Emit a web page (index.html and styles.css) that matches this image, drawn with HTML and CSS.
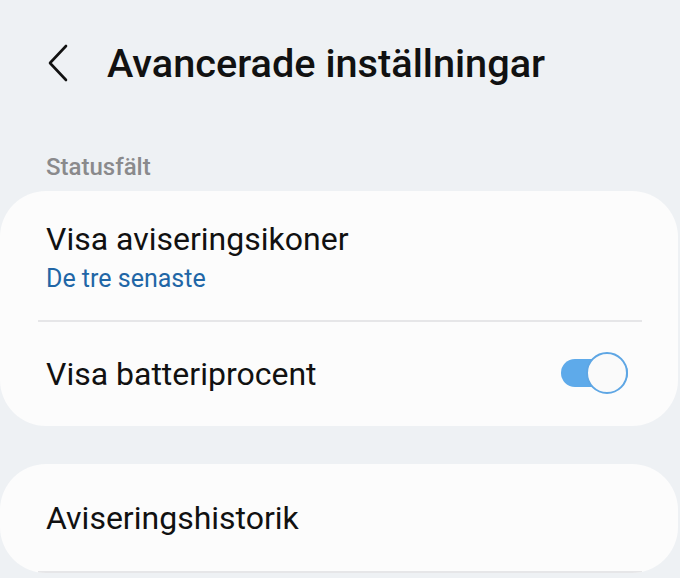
FILE: index.html
```html
<!DOCTYPE html>
<html lang="sv">
<head>
<meta charset="utf-8">
<link rel="stylesheet" href="styles.css">
</head>
<body>
<header class="topbar">
  <svg class="back" width="24" height="40" viewBox="0 0 24 40"><path d="M20 3 L4 20 L20 37" fill="none" stroke="#111" stroke-width="2.6" stroke-linecap="round" stroke-linejoin="round"/></svg>
  <h1 class="title">Avancerade inställningar</h1>
</header>
<div class="section-label">Statusfält</div>
<section class="card">
  <div class="item item-two">
    <div class="item-title">Visa aviseringsikoner</div>
    <div class="item-sub">De tre senaste</div>
  </div>
  <div class="divider"></div>
  <div class="item item-toggle">
    <div class="item-title">Visa batteriprocent</div>
    <div class="switch"><div class="knob"></div></div>
  </div>
</section>
<section class="card card2">
  <div class="item item-one">
    <div class="item-title">Aviseringshistorik</div>
  </div>
  <div class="divider"></div>
</section>
</body>
</html>
```
FILE: styles.css
```css
html, body {
  margin: 0;
  padding: 0;
}
body {
  background: #eef1f4;
  font-family: Roboto, "Noto Sans", sans-serif;
  width: 680px;
  height: 578px;
  overflow: hidden;
}
.topbar {
  display: flex;
  align-items: center;
  height: 126px;
  box-sizing: border-box;
  padding-left: 46px;
}
.back {
  display: block;
  margin-right: 37px;
}
.title {
  margin: 0;
  font-size: 39.7px;
  font-weight: 500;
  color: #111;
  letter-spacing: 0;
}
.section-label {
  margin-top: 27px;
  padding-left: 46px;
  font-size: 24px;
  font-weight: 500;
  color: #8a8a8c;
  line-height: 28px;
  height: 28px;
}
.card {
  margin: 10px 2px 0 0;
  background: #fcfcfc;
  border-radius: 46px;
  overflow: hidden;
}
.card2 {
  margin-top: 38px;
}
.item {
  padding-left: 46px;
  padding-right: 50px;
  box-sizing: border-box;
}
.item-title {
  font-size: 32px;
  color: #111;
  line-height: 38px;
}
.item-sub {
  font-size: 25px;
  color: #2166a6;
  line-height: 30px;
  margin-top: 6px;
}
.item-two {
  height: 129px;
  padding-top: 29px;
}
.item-toggle {
  height: 104px;
  display: flex;
  align-items: center;
  justify-content: space-between;
}
.item-one {
  height: 107px;
  display: flex;
  align-items: center;
  padding-top: 1px;
}
.divider {
  height: 2px;
  background: #e6e6e8;
  margin: 0 36px 0 38px;
}
.switch {
  position: relative;
  width: 67px;
  height: 28px;
  background: #5eaaea;
  border-radius: 14px;
  margin-top: -2px;
}
.knob {
  position: absolute;
  right: 0;
  top: -7px;
  width: 38px;
  height: 38px;
  border-radius: 50%;
  background: #fafafa;
  border: 2px solid #5ea6e4;
}
```
